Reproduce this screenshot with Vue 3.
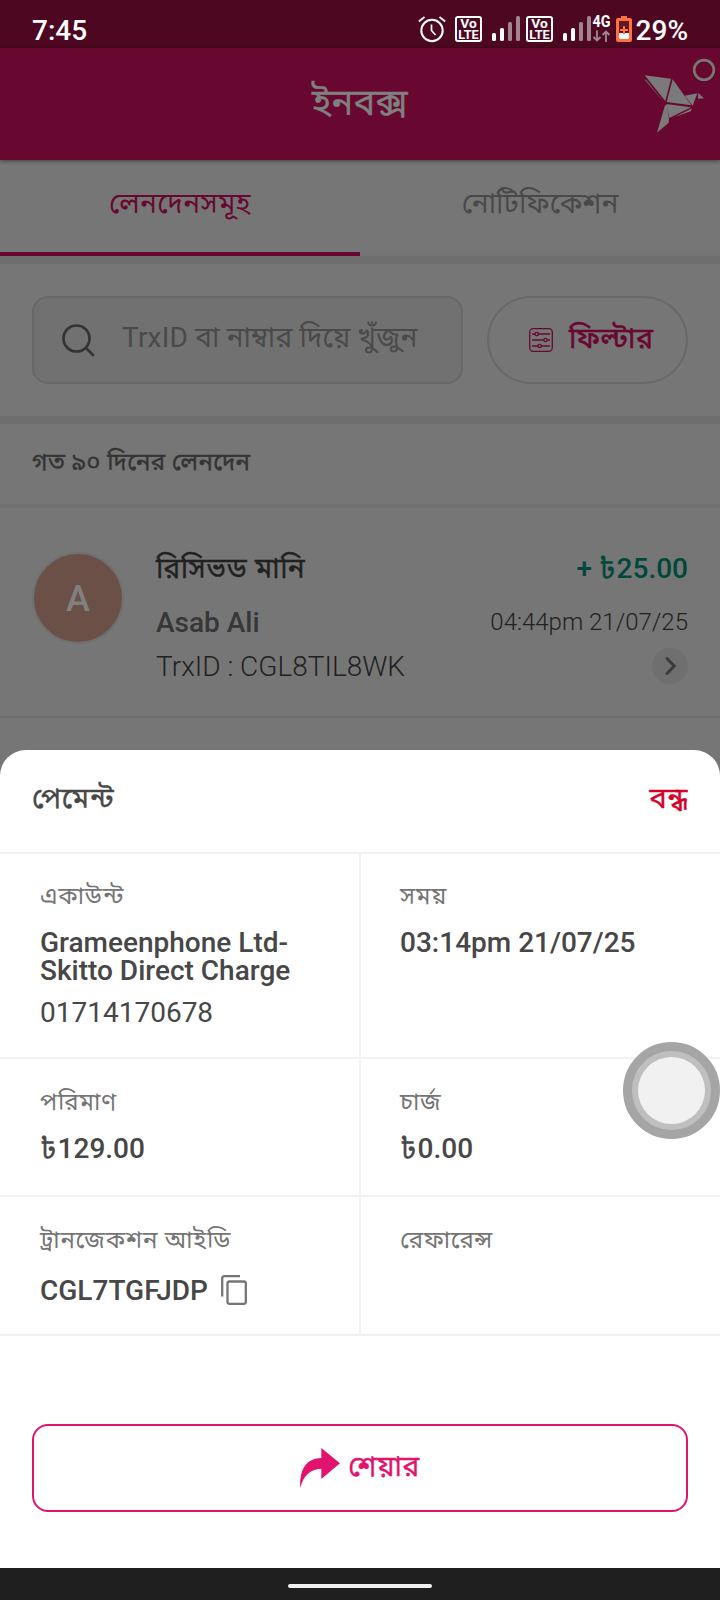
<script setup>
const bars = [
  { x: 0, h: 8, on: true },
  { x: 8, h: 13, on: true },
  { x: 16, h: 19, on: false },
  { x: 24, h: 25, on: false },
]
const rows = [
  [
    { label: 'একাউন্ট', value: 'Grameenphone Ltd-Skitto Direct Charge', sub: '01714170678' },
    { label: 'সময়', value: '03:14pm 21/07/25' },
  ],
  [
    { label: 'পরিমাণ', taka: true, value: '129.00' },
    { label: 'চার্জ', taka: true, value: '0.00' },
  ],
  [
    { label: 'ট্রানজেকশন আইডি', value: 'CGL7TGFJDP', copy: true },
    { label: 'রেফারেন্স', value: '' },
  ],
]
</script>

<template>
  <div class="screen">
    <div class="status">
      <span class="clock">7:45</span>
      <div class="indicators">
        <svg class="alarm" width="28" height="28" viewBox="0 0 28 28" fill="none" stroke="#fff" stroke-width="2">
          <circle cx="14" cy="15.500" r="10.700" />
          <path d="M13.500 9.500v6l4 4.500M.8 6.500 6.500 2M21.500 2 27.200 6.500" stroke-width="1.700" />
        </svg>
        <template v-for="n in 2" :key="n">
          <svg class="volte" width="27" height="26" viewBox="0 0 27 26">
            <rect x="1" y="1" width="25" height="24" rx="2" fill="none" stroke="#fff" stroke-width="2" />
            <text x="13.500" y="12" font-size="12.500" textLength="16.500" lengthAdjust="spacingAndGlyphs">Vo</text>
            <text x="13.500" y="23" font-size="13" textLength="20.500" lengthAdjust="spacingAndGlyphs">LTE</text>
          </svg>
          <svg class="bars" width="28" height="25" viewBox="0 0 28 25">
            <rect v-for="b in bars" :key="b.x" :x="b.x" :y="25 - b.h" width="4" :height="b.h" rx="1.500" :fill="b.on ? '#fff' : '#a18390'" />
          </svg>
        </template>
        <svg class="net" width="19" height="28" viewBox="0 0 19 28">
          <text x="9.500" y="12" font-size="16" textLength="18" lengthAdjust="spacingAndGlyphs">4G</text>
          <path d="M5 15.500v10M1.500 22 5 25.500 8.500 22M14 27V17M10.500 20 14 16.500 17.500 20" fill="none" stroke="#a18390" stroke-width="1.900" />
        </svg>
        <svg class="battery" width="16" height="26" viewBox="0 0 16 26">
          <path d="M5 0h6v2h3q2 0 2 2v20q0 2-2 2H2q-2 0-2-2V4q0-2 2-2h3z" fill="#ff7043" />
          <path d="M3 5h10v18H3z" fill="#5d1a24" />
          <path d="M3 17h10v6H3z" fill="#fff" />
          <path d="M8 10v8M4 14h8" stroke="#ff7043" stroke-width="2" />
        </svg>
        <span>29%</span>
      </div>
    </div>

    <header class="appbar">
      <h1 class="bn">ইনবক্স</h1>
      <svg class="bird" width="100" height="97" viewBox="0 9 300 291">
        <g fill="#7a7a7a">
          <polygon points="74,91 153,101 136,168" />
          <polygon points="73,103 79,106 134,174" />
          <polygon points="158,103 214,181 140,171" />
          <polygon points="194,152 232,145 218,182" />
          <polygon points="235,144 252,160 234,161" />
          <polygon points="139,177 213,187 148,219" />
          <polygon points="163,217 216,190 212,199" />
          <polygon points="135,181 141,181 147,223 146,233 111,263" />
        </g>
        <circle cx="252" cy="78" r="31" fill="none" stroke="#4d0721" stroke-opacity=".4" stroke-width="9" />
        <circle cx="252" cy="75" r="29.500" fill="none" stroke="#777" stroke-width="8" />
      </svg>
    </header>

    <nav class="tabs">
      <div class="tab active">লেনদেনসমূহ</div>
      <div class="tab">নোটিফিকেশন</div>
    </nav>

    <section class="search-row">
      <div class="search">
        <svg width="34" height="34" viewBox="0 0 34 34" fill="none" stroke="#343434" stroke-width="2.700" stroke-linecap="round">
          <circle cx="15.500" cy="15.500" r="13" /><path d="m25 25 7 7" />
        </svg>
        <span>TrxID বা নাম্বার দিয়ে খুঁজুন</span>
      </div>
      <div class="filter">
        <svg width="24" height="24" viewBox="0 0 24 24" fill="none" stroke="#680830" stroke-width="1.300">
          <rect x=".7" y=".7" width="22.600" height="22.600" rx="3.500" />
          <path d="M3 6h3M9.500 6H21M3 12h11.500M18.500 12H21M3 18h6M12.500 18H21" />
          <circle cx="7.700" cy="6" r="1.700" /><circle cx="16.500" cy="12" r="1.700" /><circle cx="10.700" cy="18" r="1.700" />
        </svg>
        <span class="bn">ফিল্টার</span>
      </div>
    </section>

    <div class="period bn">গত ৯০ দিনের লেনদেন</div>

    <article class="item">
      <div class="avatar">A</div>
      <div class="who">
        <div class="kind bn">রিসিভড মানি</div>
        <div class="name">Asab Ali</div>
        <div class="trx">TrxID : CGL8TIL8WK</div>
      </div>
      <div class="meta">
        <div class="amount">+ <span class="taka bn">৳</span>25.00</div>
        <div class="date">04:44pm 21/07/25</div>
        <div class="go">
          <svg width="36" height="36" viewBox="0 0 36 36" fill="none" stroke="#3b3b3b" stroke-width="3" stroke-linecap="round"><path d="m15 10.500 7.200 7.500-7.200 7.500" /></svg>
        </div>
      </div>
    </article>

    <div class="sheet">
      <div class="sheet-head">
        <span class="bn">পেমেন্ট</span>
        <span class="close bn">বন্ধ</span>
      </div>
      <div v-for="(row, i) in rows" :key="i" class="row" :class="'row-' + (i + 1)">
        <div v-for="cell in row" :key="cell.label" class="cell">
          <div class="label">{{ cell.label }}</div>
          <div class="value">
            <span v-if="cell.taka" class="taka bn">৳</span>
            <span>{{ cell.value }}</span>
            <svg v-if="cell.copy" class="copy" width="26" height="30" viewBox="0 0 26 30" fill="none" stroke="#757575" stroke-width="2.300">
              <path d="M1.200 21.500V3.200q0-2 2-2H19" /><rect x="6.500" y="6.500" width="18.300" height="22.300" rx="2" />
            </svg>
          </div>
          <div v-if="cell.sub" class="sub">{{ cell.sub }}</div>
        </div>
      </div>
      <div class="share">
        <svg width="40" height="40" viewBox="0 0 40 40"><path d="M21.300 0 40 15.300 21.300 31V20.800C10 21.500 3.500 27.500.3 40 -.8 21 6.500 10.300 21.300 10z" fill="#e2136e" /></svg>
        <span class="bn">শেয়ার</span>
      </div>
    </div>

    <div class="navbar"><i></i></div>
    <div class="assist"><i></i></div>
  </div>
</template>

<style>
body { margin: 0; }
</style>

<style scoped>
.screen { position: relative; width: 720px; height: 1600px; overflow: hidden; display: flex; flex-direction: column; background: #767676; font-family: Roboto, "Noto Sans Bengali", "Noto Sans", sans-serif; font-size: 28px; line-height: 40px; color: #474747; box-sizing: border-box; }
.screen * { box-sizing: border-box; }
.screen svg { display: block; flex: none; overflow: visible; }
.bn { font-weight: 400; -webkit-text-stroke: .4px currentColor; }
.status { height: 48px; flex: none; background: #4d0721; color: #fff; display: flex; justify-content: space-between; align-items: flex-start; padding: 10px 32px 0 32px; font-weight: 500; }
.status span { margin-top: 1px; }
.indicators { display: flex; }
.alarm { margin-top: 5px; }
.volte { margin: 6px 0 0 9px; }
.bars { margin: 6px 0 0 10px; }
.bars + .volte { margin-left: 6px; }
.volte text, .net text { font-family: Roboto, sans-serif; font-weight: 700; fill: #fff; text-anchor: middle; }
.net { margin: 5px 0 0 1px; }
.battery { margin: 6px 4px 0 5px; }
.appbar { height: 112px; flex: none; background: #680830; color: #808080; display: grid; grid-template-columns: 100px 1fr 100px; align-items: center; box-shadow: 0 1px 4px rgba(0, 0, 0, .45); z-index: 1; }
.appbar h1 { grid-column: 2; margin: 0; padding-bottom: 3px; text-align: center; font-size: 36px; letter-spacing: .4px; }
.bird { align-self: start; }
.tabs { height: 104px; flex: none; display: flex; border-bottom: 8px solid #6e6e6e; color: #494949; }
.tab { flex: 1; display: flex; align-items: center; justify-content: center; padding-bottom: 5px; border-bottom: 4px solid transparent; }
.tab:not(.active) { border-color: #747474; }
.tab.active { color: #680830; border-color: #680830; letter-spacing: .35px; }
.search-row { height: 160px; flex: none; padding: 32px; display: flex; gap: 24px; border-bottom: 8px solid #6e6e6e; }
.search { width: 431px; height: 88px; border: 2px solid #686868; border-radius: 16px; background: #717171; display: flex; align-items: center; padding-left: 27px; color: #4a4a4a; }
.search span { margin: 0 0 4px 27px; white-space: nowrap; letter-spacing: .2px; }
.filter { width: 201px; height: 88px; border: 2px solid #686868; border-radius: 44px; display: flex; align-items: center; padding-left: 40px; gap: 16px; color: #680830; letter-spacing: .8px; }
.filter span { margin-bottom: 2px; white-space: nowrap; -webkit-text-stroke-width: .6px; }
.period { height: 84px; flex: none; border-bottom: 4px solid #717171; padding: 0 32px 4px; display: flex; align-items: center; color: #343434; font-size: 24px; letter-spacing: .4px; }
.item { height: 210px; flex: none; border-bottom: 2px solid #6d6d6d; padding: 41px 32px 0; display: flex; }
.avatar { width: 92px; height: 92px; margin: 3px 0 0 0; padding-top: 1px; border: 2px solid #707070; border-radius: 50%; background: #6b5048; color: #808080; font-size: 36px; font-weight: 500; display: flex; align-items: center; justify-content: center; }
.who { margin-left: 32px; color: #212121; white-space: nowrap; }
.kind { letter-spacing: .7px; }
.name { margin-top: 14px; color: #373737; font-weight: 500; }
.trx { margin-top: 4px; font-weight: 300; }
.meta { margin-left: auto; display: flex; flex-direction: column; align-items: flex-end; white-space: nowrap; color: #212121; }
.amount { color: #00483a; font-weight: 500; }
.taka { letter-spacing: 1px; }
.date { margin-top: 17px; font-size: 24px; line-height: 32px; font-weight: 300; }
.go { margin-top: 10px; border-radius: 50%; background: #6f6f6f; }
.sheet { margin-top: 32px; flex: 1; background: #fff; border-radius: 26px 26px 0 0; display: flex; flex-direction: column; }
.sheet-head { height: 104px; flex: none; border-bottom: 2px solid #f2f2f2; padding: 0 32px 4px; display: flex; justify-content: space-between; align-items: center; letter-spacing: .7px; }
.close { color: #d3002a; letter-spacing: .6px; font-size: 29px; margin-bottom: 2px; }
.row { display: flex; flex: none; border-bottom: 2px solid #f2f2f2; }
.row-1 { height: 205px; }
.row-2 { height: 138px; }
.row-3 { height: 139px; }
.cell { width: 361px; padding: 27px 40px 0; }
.row-1 .cell { padding-top: 26px; }
.cell:first-child { border-right: 2px solid #f2f2f2; }
.cell:last-child { width: 359px; padding-left: 39px; }
.label { font-size: 24px; line-height: 32px; color: #757575; white-space: nowrap; letter-spacing: .75px; }
.value { margin-top: 17px; line-height: 28px; font-weight: 500; display: flex; }
.row-3 .value { margin-top: 21px; }
.copy { margin: -2px 0 0 13px; }
.sub { margin-top: 14px; line-height: 28px; }
.share { margin: 88px 32px 0; height: 88px; flex: none; border: 2px solid #e2136e; border-radius: 16px; display: flex; align-items: center; justify-content: center; gap: 8px; color: #e2136e; letter-spacing: .6px; }
.share span { margin-bottom: 2px; }
.navbar { height: 32px; flex: none; background: #1f1f1f; display: flex; justify-content: center; align-items: center; padding-top: 4px; }
.navbar i { width: 144px; height: 4px; border-radius: 2px; background: #f0f0ee; }
.assist { position: absolute; left: 623px; top: 1042px; width: 97px; height: 97px; border-radius: 50%; border: 9px solid #a5a5a5; background: #bfbfbf; display: flex; align-items: center; justify-content: center; }
.assist i { width: 67px; height: 67px; border-radius: 50%; background: #f1f1f1; }
</style>
